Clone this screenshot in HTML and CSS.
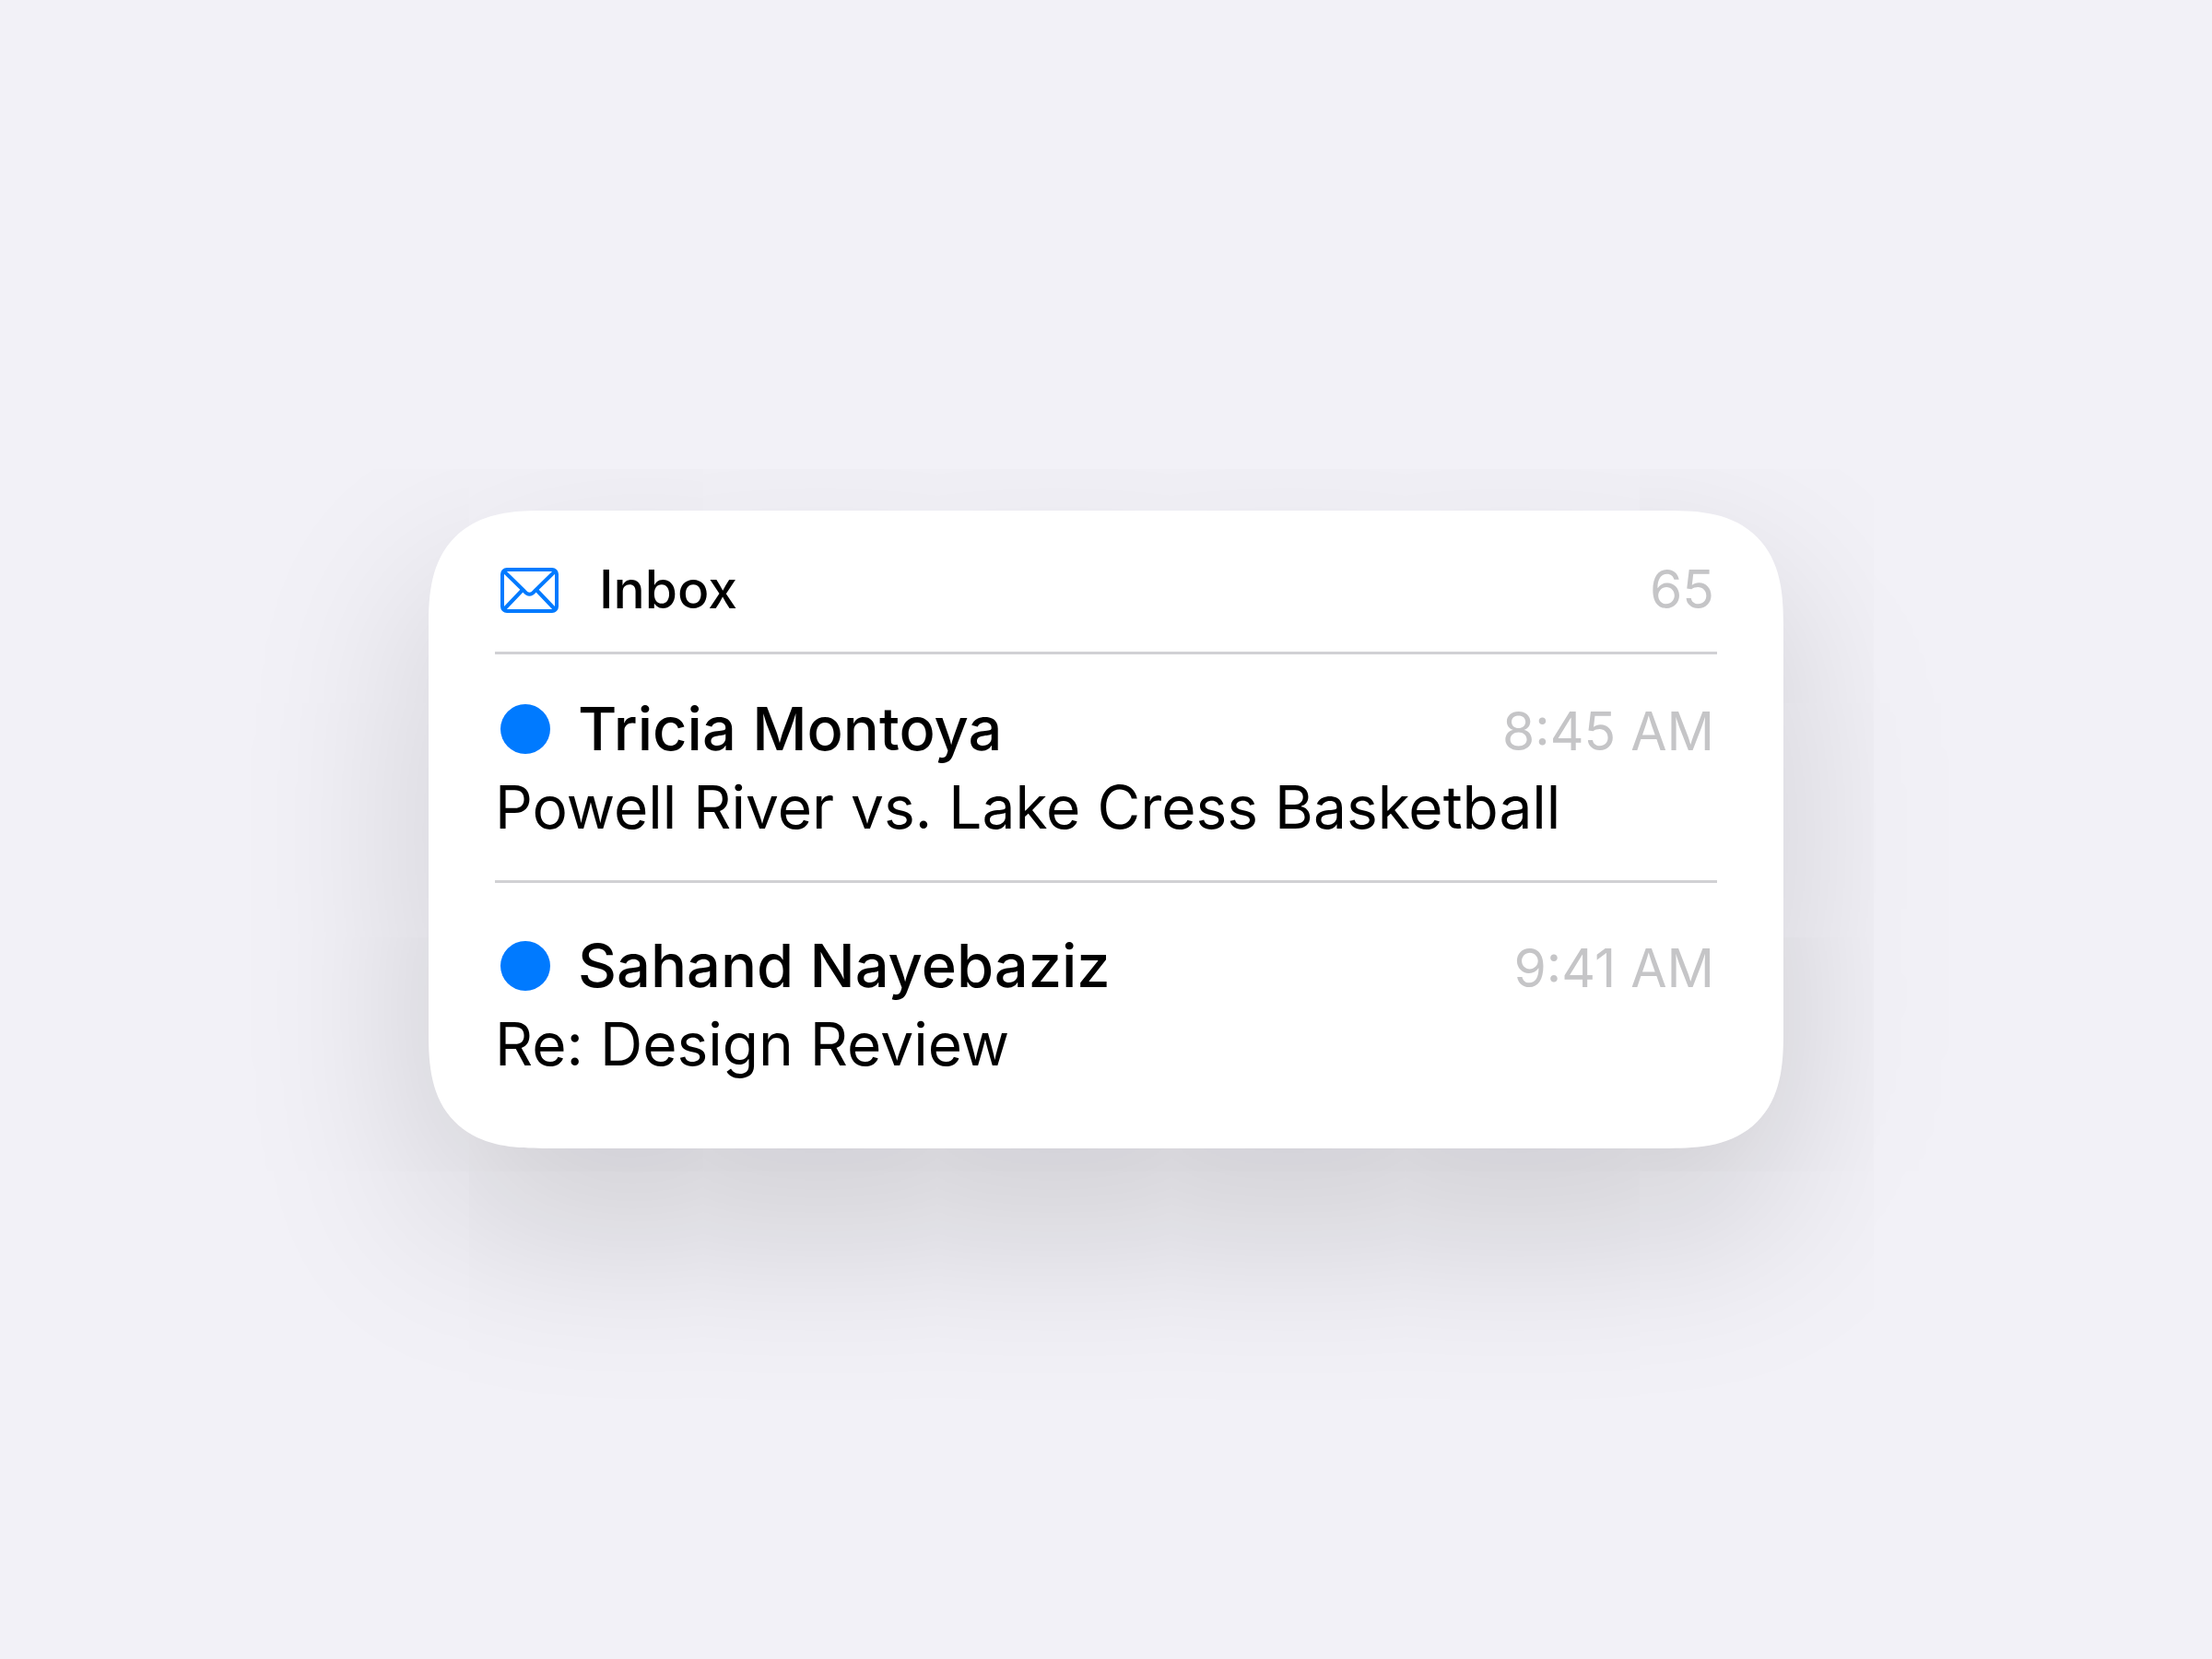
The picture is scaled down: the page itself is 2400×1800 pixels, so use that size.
FILE: index.html
```
<!DOCTYPE html>
<html lang="en">
<head>
    <meta charset="UTF-8">
    <meta name="viewport" content="width=device-width, initial-scale=1">
    <title>Inbox</title>
    <link rel="stylesheet" href="styles.css">
</head>
<body>
    <main class="card">
        <header class="inbox-header">
            <svg class="mail-icon" viewBox="0 0 63 49" aria-hidden="true">
                <rect x="2" y="2" width="59" height="45" rx="5"/>
                <path d="M4 4 L26 25.500 Q31.500 32 37 25.500 L59 4"/>
                <path d="M4 45 L23 25 M59 45 L40 25"/>
            </svg>
            <h1 class="title">Inbox</h1>
            <span class="meta">65</span>
        </header>
        <ul class="messages">
            <li class="message">
                <div class="message-top">
                    <span class="dot"></span>
                    <h2 class="sender">Tricia Montoya</h2>
                    <time class="meta" datetime="08:45">8:45 AM</time>
                </div>
                <p class="subject">Powell River vs. Lake Cress Basketball</p>
            </li>
            <li class="message">
                <div class="message-top">
                    <span class="dot"></span>
                    <h2 class="sender">Sahand Nayebaziz</h2>
                    <time class="meta" datetime="09:41">9:41 AM</time>
                </div>
                <p class="subject">Re: Design Review</p>
            </li>
        </ul>
    </main>
</body>
</html>
```
FILE: styles.css
```
* {
    box-sizing: border-box;
}

body {
    display: flex;
    justify-content: center;
    align-items: center;
    min-height: 100vh;
    margin: 0;
    background: #f2f1f7;
    color: #000;
    font-family: Inter, "Liberation Sans", sans-serif;
}

h1, h2, p, ul {
    margin: 0;
    padding: 0;
}

.card {
    width: 90%;
    max-width: 1470px;
    padding: 51px 72px 34px;
    background: #fff;
    border-radius: 100px;
    box-shadow: 0 80px 200px rgba(0, 0, 0, 0.17);
}

/* smoother corners where the browser has them */
@supports (corner-shape: superellipse(1.4)) {
    .card {
        border-radius: 124px;
        corner-shape: superellipse(1.4);
    }
}

.inbox-header {
    display: flex;
    align-items: center;
    padding: 0 3px 32px 6px;
    border-bottom: 3px solid #d1d1d4;
}

.mail-icon {
    width: 63px;
    height: 49px;
    margin-right: 44px;
    fill: none;
    stroke: #007aff;
    stroke-width: 4;
    stroke-linecap: round;
    stroke-linejoin: round;
}

.title {
    font-size: 57px;
    font-weight: 500;
    line-height: 70px;
}

.meta {
    margin-left: auto;
    color: #c5c5c7;
    font-size: 57px;
    line-height: 70px;
}

.messages {
    list-style: none;
}

.message {
    padding: 38px 0 37px;
}

.message + .message {
    padding-top: 47px;
    border-top: 3px solid #d1d1d4;
}

.message-top {
    display: flex;
    align-items: baseline;
    padding: 0 3px 0 6px;
}

.dot {
    align-self: center;
    width: 54px;
    height: 54px;
    margin-right: 30px;
    background: #007aff;
    border-radius: 50%;
}

.sender {
    font-size: 65px;
    font-weight: 500;
    line-height: 85px;
}

.subject {
    font-size: 64px;
    line-height: 85px;
}
```
